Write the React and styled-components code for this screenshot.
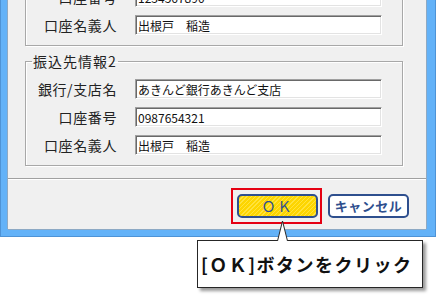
import React from "react"
import styled, { createGlobalStyle } from "styled-components"

const GlobalStyle = createGlobalStyle`
  html, body {
    margin: 0;
    padding: 0;
    background: #fff;
    overflow: hidden;
  }
  body {
    font-family: "Noto Sans CJK JP", "Liberation Sans", sans-serif;
  }
`

const Stage = styled.div`
  position: relative;
  width: 436px;
  height: 300px;
  overflow: hidden;
`

const Window = styled.div`
  margin-top: -79px;
  width: 436px;
  box-sizing: border-box;
  padding: 0 10px 8px 8px;
  background: #63b2f8;
  box-shadow: inset 0 -1px 0 #4e93d6, inset 1px 0 0 #4e93d6,
    inset -1px 0 0 #4e93d6;
`

const Dialog = styled.div`
  background: #f0f0f0;
  box-shadow: 1px 0 0 #8da9c4, -1px 0 0 #8da9c4, 0 1px 0 #8da9c4;
`

const TopPanel = styled.div`
  display: flex;
  flex-direction: column;
  gap: 7px;
  padding: 12px 23px 12px 17px;
  border-bottom: 1px solid #a0a0a0;
  box-shadow: 0 1px 0 #fff;
`

const Group = styled.fieldset`
  margin: 0;
  padding: 10px 20px 10px 0;
  min-width: 0;
  border: 1px solid #a8a8a8;
  box-shadow: inset 1px 1px 0 #fff, 1px 1px 0 #fff;
`

const Legend = styled.legend`
  margin-left: 6px;
  padding: 0 1px;
  font-size: 14px;
  line-height: 16px;
  letter-spacing: 1px;
  color: #222;
`

const Rows = styled.div`
  display: grid;
  grid-template-columns: 91px 247px;
  column-gap: 18px;
  row-gap: 8px;
  align-items: center;
`

const Label = styled.label`
  text-align: right;
  font-size: 14px;
  line-height: 20px;
  letter-spacing: 0.6px;
  color: #222;
  white-space: nowrap;
`

const Field = styled.input`
  width: 247px;
  height: 20px;
  box-sizing: border-box;
  margin: 0;
  padding: 0 2px;
  font-family: "Noto Sans CJK JP", "Liberation Sans", sans-serif;
  font-size: 12px;
  color: #111;
  background: #fff;
  border: 1px solid;
  border-color: #a0a0a0 #fff #fff #a0a0a0;
  box-shadow: inset 1px 1px 0 #696969, inset -1px -1px 0 #e3e3e3;
  outline: none;
`

const ButtonBar = styled.div`
  display: flex;
  justify-content: flex-end;
  align-items: center;
  gap: 6px;
  padding: 9px 17px 5px;
`

const Highlight = styled.div`
  display: flex;
  padding: 4px 2px 4px 4px;
  border: 2px solid #e50012;
`

const DialogButton = styled.button`
  width: 81px;
  height: 24px;
  box-sizing: border-box;
  margin: 0;
  padding: 0;
  border: 2px solid #2e4f8e;
  border-radius: 5px;
  background: ${p =>
    p.$primary
      ? "repeating-linear-gradient(-45deg, #fdd500 0 2px, #ffe33c 2px 3px)"
      : "#fff"};
  color: #2e4f8e;
  font-family: "Noto Sans CJK JP", "Liberation Sans", sans-serif;
  font-size: ${p => (p.$primary ? "14px" : "13px")};
  font-weight: ${p => (p.$primary ? 400 : 700)};
  letter-spacing: ${p => (p.$primary ? "2px" : "0.5px")};
  line-height: 20px;
`

const Callout = styled.div`
  position: absolute;
  left: 197px;
  top: 240px;
  width: 226px;
  height: 48px;
  box-sizing: border-box;
  display: flex;
  align-items: center;
  padding-left: 3px;
  background: #fff;
  border: 1px solid #262626;
  box-shadow: 3px 3px 3px rgba(0, 0, 0, 0.4);
  font-size: 18px;
  font-weight: 700;
  letter-spacing: 1.5px;
  color: #111;
  white-space: nowrap;
`

const Pointer = styled.svg`
  position: absolute;
  left: 79px;
  top: -21px;
  overflow: visible;
`

const groups = [
  {
    title: "振込先情報1",
    rows: [
      ["銀行/支店名", "あきんど銀行あきんど支店"],
      ["口座番号", "1234567890"],
      ["口座名義人", "出根戸　稲造"],
    ],
  },
  {
    title: "振込先情報2",
    rows: [
      ["銀行/支店名", "あきんど銀行あきんど支店"],
      ["口座番号", "0987654321"],
      ["口座名義人", "出根戸　稲造"],
    ],
  },
]

export default function App() {
  return (
    <Stage>
      <GlobalStyle />
      <Window>
        <Dialog>
          <TopPanel>
            {groups.map(group => (
              <Group key={group.title}>
                <Legend>{group.title}</Legend>
                <Rows>
                  {group.rows.map(([label, value]) => (
                    <React.Fragment key={label}>
                      <Label>{label}</Label>
                      <Field readOnly value={value} />
                    </React.Fragment>
                  ))}
                </Rows>
              </Group>
            ))}
          </TopPanel>
          <ButtonBar>
            <Highlight>
              <DialogButton $primary>ＯＫ</DialogButton>
            </Highlight>
            <DialogButton>キャンセル</DialogButton>
          </ButtonBar>
        </Dialog>
      </Window>
      <Callout>
        <Pointer width="12" height="22" viewBox="0 0 12 22">
          <polygon points="0,22 5.5,1 11,22" fill="#fff" />
          <path d="M0.5 21 L5.5 1 L10.5 21" fill="none" stroke="#262626" />
        </Pointer>
        [ＯＫ]ボタンをクリック
      </Callout>
    </Stage>
  )
}
